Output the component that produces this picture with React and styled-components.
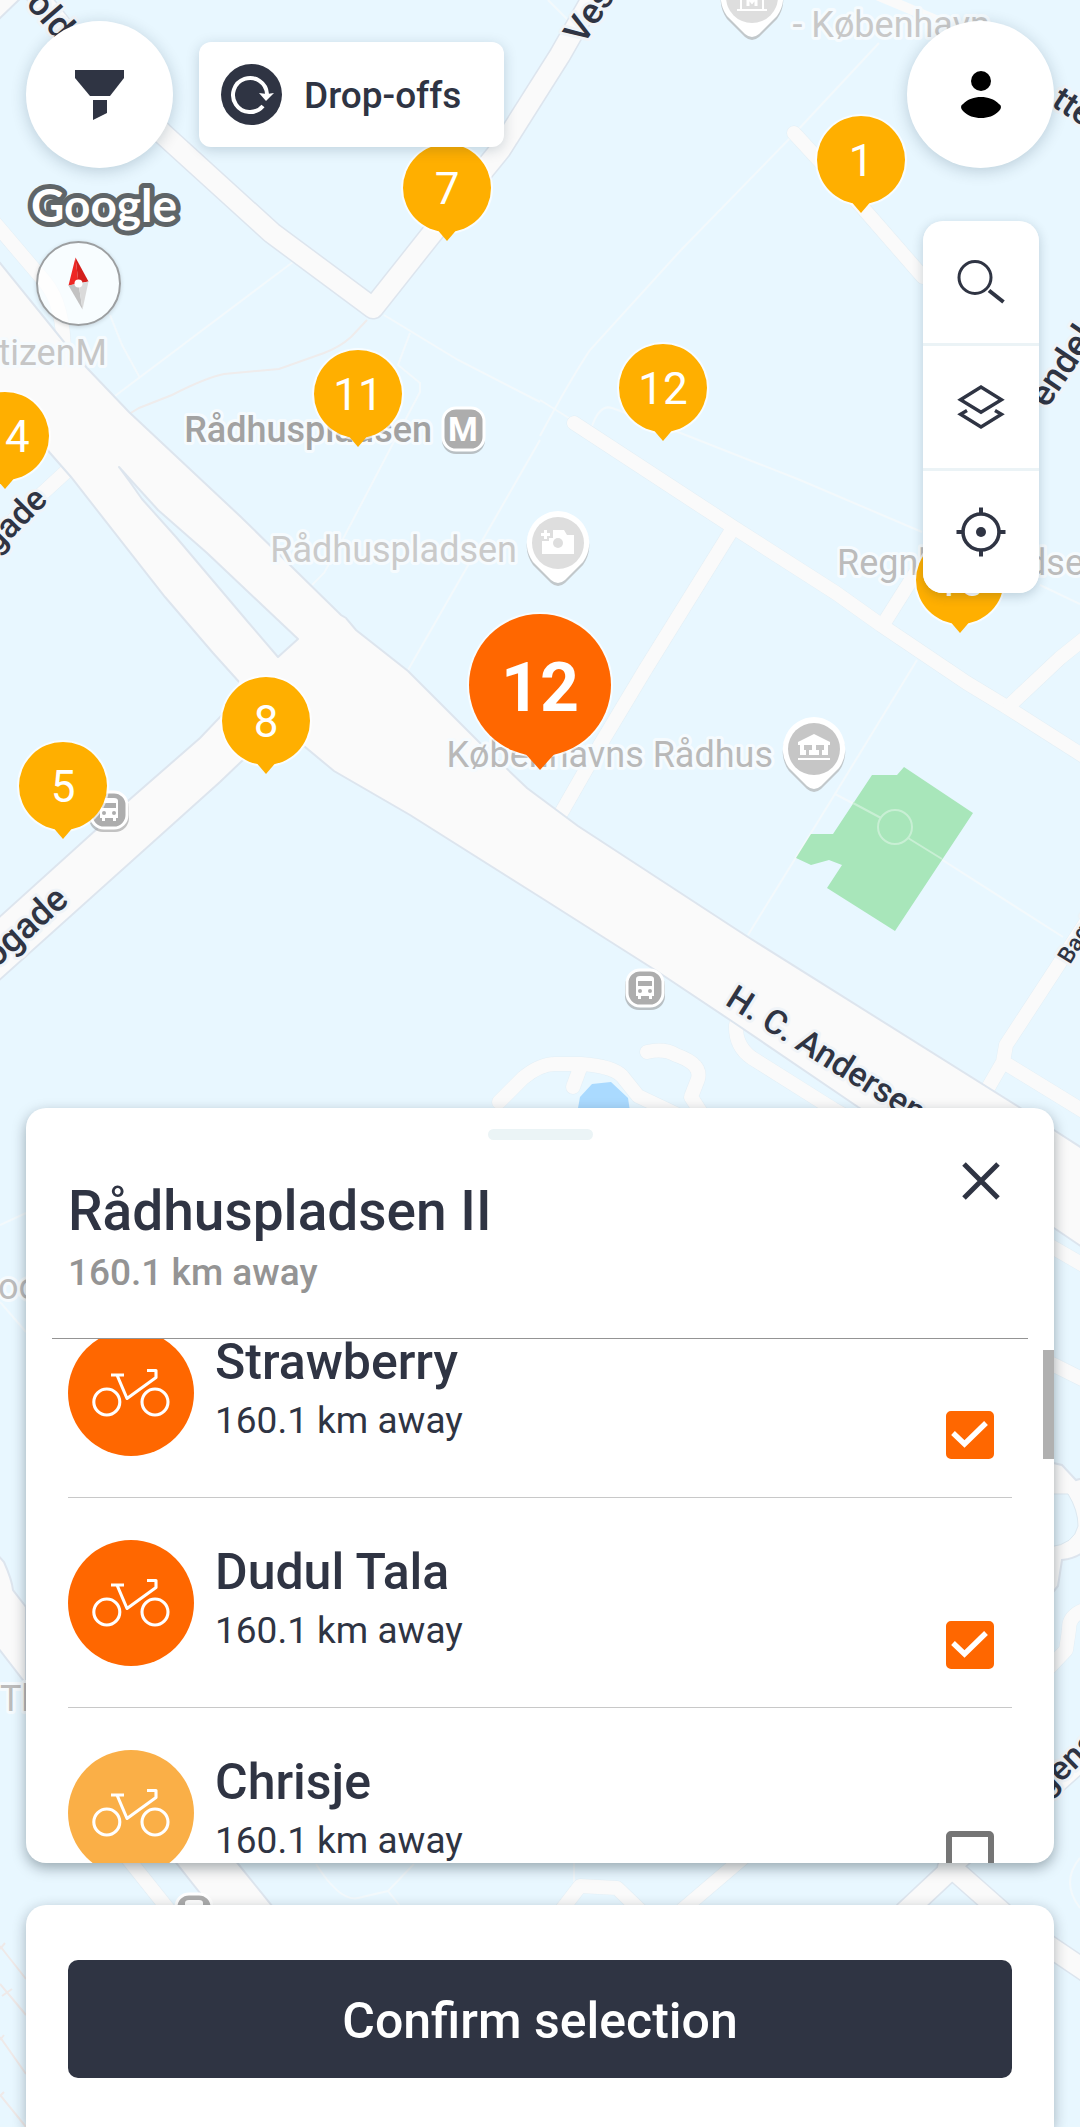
import { useLayoutEffect, useRef, useState } from "react";
import styled, { createGlobalStyle } from "styled-components";

const GlobalStyle = createGlobalStyle`
    * {
        box-sizing: border-box;
    }

    body {
        margin: 0;
        font-family: Roboto, "Liberation Sans", sans-serif;
        color: #2f3443;
        background-color: #e8f7ff;
    }

    button {
        border: none;
        padding: 0;
        font-family: inherit;
        color: inherit;
        cursor: pointer;
    }
`;

const Screen = styled.div`
    position: relative;
    min-height: 100vh;
    display: flex;
    flex-direction: column;
`;

/* ---------- map ---------- */

const MapLayer = styled.div`
    position: absolute;
    inset: 0;
    overflow: hidden;
`;

const MapCanvas = styled.div`
    position: relative;
    width: 100%;
    min-height: 100%;
    aspect-ratio: 1080 / 2127;
`;

const MapDrawing = styled.svg`
    position: absolute;
    width: 100%;
    height: 100%;
    font-family: Roboto, "Liberation Sans", sans-serif;
`;

const Pin = styled.button`
    position: absolute;
    left: ${props => (props.$x / 1080) * 100}%;
    top: ${props => (props.$y / 2127) * 100}%;
    transform: translate(-50%, -50%);
    width: ${props => (props.$active ? 142 : 88)}px;
    height: ${props => (props.$active ? 142 : 88)}px;
    padding-top: ${props => (props.$active ? 5 : 2)}px;
    border-radius: 50%;
    background-color: ${props => (props.$active ? "#ff6700" : "#ffaf00")};
    box-shadow: 0 0 0 2px rgba(255, 255, 255, 0.7);
    color: white;
    font-size: ${props => (props.$active ? 68 : 44)}px;
    font-weight: ${props => (props.$active ? 700 : 400)};

    &::after {
        content: "";
        position: absolute;
        left: 50%;
        bottom: ${props => (props.$active ? -14 : -9)}px;
        width: ${props => (props.$active ? 36 : 24)}px;
        height: ${props => (props.$active ? 20 : 14)}px;
        transform: translateX(-50%);
        background-color: inherit;
        clip-path: polygon(0 0, 100% 0, 50% 100%);
    }
`;

/* ---------- controls over the map ---------- */

const TopBar = styled.header`
    position: relative;
    display: flex;
    align-items: center;
    padding: 21px 26px 0;
`;

const RoundButton = styled.button`
    display: grid;
    place-items: center;
    width: 147px;
    height: 147px;
    border-radius: 50%;
    background-color: white;
    box-shadow: 0 3px 16px rgba(0, 40, 60, 0.2);
    margin-left: ${props => (props.$right ? "auto" : "0")};
`;

const FilterChip = styled.button`
    display: flex;
    align-items: center;
    gap: 22px;
    height: 105px;
    margin-left: 26px;
    padding: 0 43px 0 22px;
    border-radius: 12px;
    background-color: white;
    box-shadow: 0 3px 14px rgba(0, 40, 60, 0.18);
    font-size: 37px;
    line-height: 44px;
    font-weight: 500;

    span {
        padding-top: 3px;
    }
`;

const MapControls = styled.div`
    position: relative;
    display: flex;
    justify-content: space-between;
    align-items: flex-start;
    padding: 0 41px 0 26px;
`;

const Attribution = styled.div`
    display: flex;
    flex-direction: column;
    padding-top: 12px;
`;

const Compass = styled.button`
    width: 85px;
    height: 85px;
    margin: 1px 0 0 10px;
    border-radius: 50%;
    border: 2px solid #9c9fa1;
    background-color: rgba(255, 255, 255, 0.7);
    box-shadow: 0 1px 4px rgba(0, 0, 0, 0.15);
`;

const ToolStack = styled.div`
    display: flex;
    flex-direction: column;
    gap: 3px;
    width: 116px;
    margin-top: 53px;
    border-radius: 20px;
    overflow: hidden;
    background-color: #ebf3f6;
    box-shadow: 0 3px 12px rgba(0, 40, 60, 0.2);
`;

const ToolButton = styled.button`
    display: grid;
    place-items: center;
    height: 122px;
    background-color: white;
`;

/* ---------- bottom sheet ---------- */

const Sheet = styled.section`
    position: relative;
    margin: auto 26px 42px;
    border-radius: 20px;
    overflow: hidden;
    background-color: white;
    box-shadow: 0 5px 14px rgba(0, 20, 30, 0.35);
`;

const Handle = styled.div`
    width: 105px;
    height: 11px;
    margin: 21px auto 11px;
    border-radius: 6px;
    background-color: #ebf4f6;
`;

const SheetHeader = styled.div`
    display: flex;
    justify-content: space-between;
    align-items: flex-start;
    padding: 0 43px 43px 42px;
`;

const Title = styled.h1`
    margin: 28px 0 8px;
    font-size: 55px;
    line-height: 64px;
    font-weight: 500;
`;

const Distance = styled.p`
    margin: 0;
    font-size: 37px;
    line-height: 44px;
    font-weight: ${props => (props.$muted ? 500 : 400)};
    color: ${props => (props.$muted ? "#949494" : "inherit")};
`;

const CloseButton = styled.button`
    display: grid;
    place-items: center;
    width: 60px;
    height: 60px;
    background: none;
`;

const Divider = styled.hr`
    height: 1px;
    margin: 0 26px;
    border: none;
    background-color: #949494;
`;

const ListArea = styled.div`
    position: relative;
`;

const BikeList = styled.ul`
    max-height: 524px;
    margin: 0;
    padding: 0 42px;
    list-style-type: none;
    overflow-y: auto;
    scrollbar-width: none;
`;

const ScrollThumb = styled.div`
    position: absolute;
    top: 11px;
    right: 0;
    width: 11px;
    height: 109px;
    background-color: #b0b0b0;
`;

const BikeRow = styled.label`
    display: flex;
    gap: 21px;
    height: 209px;
    padding: 42px 18px 38px 0;
    cursor: pointer;
`;

const BikeItem = styled.li`
    height: 210px;
    border-bottom: 1px solid #c8c8c8;
`;

const BikeBadge = styled.span`
    flex: none;
    width: 126px;
    height: 126px;
    border-radius: 50%;
    background-color: ${props => (props.$selected ? "#ff6700" : "#faaf47")};
`;

const BikeText = styled.div`
    flex: 1;
    padding-top: 2px;
`;

const BikeName = styled.h2`
    margin: 0 0 7px;
    font-size: 50px;
    line-height: 60px;
    font-weight: 500;
`;

const CheckWrap = styled.span`
    display: grid;
    align-self: flex-end;

    > * {
        grid-area: 1 / 1;
    }

    svg {
        pointer-events: none;
    }
`;

const CheckInput = styled.input`
    appearance: none;
    width: 48px;
    height: 48px;
    margin: 0;
    border: 6px solid #757575;
    border-radius: 5px;
    background-color: white;

    &:checked {
        border-color: #ff6700;
        background-color: #ff6700;
    }
`;

const Footer = styled.footer`
    position: relative;
    margin: 0 26px;
    padding: 55px 42px 49px;
    border-radius: 20px 20px 0 0;
    background-color: white;
    box-shadow: 0 4px 14px rgba(0, 20, 30, 0.3);
`;

const ConfirmButton = styled.button`
    display: block;
    width: 100%;
    height: 118px;
    padding-top: 4px;
    border-radius: 10px;
    background-color: #2f3443;
    color: white;
    font-size: 50px;
    font-weight: 500;
`;

/* ---------- data ---------- */

const pins = [
  { label: "7", x: 447, y: 188 },
  { label: "1", x: 861, y: 160 },
  { label: "11", x: 358, y: 394 },
  { label: "12", x: 663, y: 388 },
  { label: "14", x: 5, y: 436 },
  { label: "10", x: 960, y: 580 },
  { label: "8", x: 266, y: 721 },
  { label: "5", x: 63, y: 786 },
  { label: "12", x: 540, y: 685, active: true },
];

const bikes = [
  { name: "Strawberry", distance: "160.1 km away", selected: true },
  { name: "Dudul Tala", distance: "160.1 km away", selected: true },
  { name: "Chrisje", distance: "160.1 km away", selected: false },
];

const mainRoads = [
  "M25 -20 L66 32 L162 133 L272 233 L373 308 L434 231 L500 150 L560 55 L597 -10",
  "M905 1912 L952 1868 L1004 1914",
  "M948 1868 L980 1840",
  "M1040 1940 L1090 1974",
  "M1030 1806 L1095 1748",
];

const streets = [
  "M794 133 L862 207 L923 277",
  "M574 423 L733 527 L836 593 L881 625 L967 683 L1005 706 L1085 757",
  "M730 533 L645 670 L600 745 L560 815",
  "M884 623 L930 550",
  "M1010 705 L1060 658 L1090 634",
  "M1090 916 L1057 967 L1006 1045 L1003 1062 L988 1088",
  "M1005 1063 L1085 1112",
  "M736 1025 Q735 1046 752 1058 L833 1109 L870 1130",
  "M499 1102 L523 1078 Q540 1064 555 1064 L581 1064 Q612 1066 622 1076 L638 1096 L678 1115",
  "M580 1068 L573 1087",
  "M647 1052 Q664 1048 676 1055 Q702 1064 698 1079 L691 1097 L702 1114",
  "M-5 537 L70 468",
  "M-6 222 L45 282 Q64 305 64 355",
  "M125 1855 L172 1914",
  "M560 1912 L580 1886 L617 1888 L644 1914",
  "M750 1852 L682 1910",
  "M1040 1240 L1085 1266",
  "M1040 1358 L1088 1382",
  "M1090 1608 Q1068 1614 1069 1630 L1066 1650 L1045 1672",
];

const footpaths = [
  "M293 262 L115 396",
  "M384 315 L458 360 L540 402",
  "M410 333 L398 365 L420 383 L420 392 L344 537 L324 573 L312 585",
  "M540 440 L408 670",
  "M110 315 L122 345 L140 378",
  "M879 43 L795 133 L681 250 L590 350 Q570 380 540 436",
  "M540 400 L572 420",
  "M592 426 Q600 404 612 408 L678 432 L800 480 L922 532",
  "M917 660 L835 794 L748 935",
  "M835 794 L881 818",
  "M908 838 L1063 937",
  "M548 0 L572 24",
  "M1040 585 L1080 604",
  "M0 1225 L26 1213",
  "M0 1302 L26 1332",
  "M316 1864 Q340 1902 358 1898 L388 1891 L414 1864",
  "M388 1891 L400 1906",
  "M574 1860 L574 1884",
  "M1080 1858 Q1060 1882 1080 1908",
];

const streetLabels = [
  { text: "oldgade", x: 25, y: 4, turn: 49, size: 36 },
  { text: "Vester", x: 583, y: 46, turn: -57, size: 36 },
  { text: "tte", x: 1050, y: 105, turn: 33 },
  { text: "endelst", x: 1047, y: 409, turn: -56, size: 36 },
  { text: "gade", x: 49, y: 501, turn: -45, anchor: "end" },
  { text: "brogade", x: 70, y: 902, turn: -42, anchor: "end", size: 36 },
  { text: "H. C. Andersens", x: 724, y: 1004, turn: 32 },
  { text: "Bag Rådhuset", x: 1070, y: 965, turn: -58, size: 23 },
  { text: "gens", x: 1047, y: 1797, turn: -44 },
];

const placeLabels = [
  { text: "citizenM", x: 107, y: 365, color: "#c6c6c6", anchor: "end" },
  { text: "- København", x: 990, y: 37, color: "#c8c8c8", anchor: "end" },
  { text: "Rådhuspladsen", x: 432, y: 442, color: "#a2a2a2", anchor: "end", weight: 500 },
  { text: "Rådhuspladsen", x: 517, y: 562, color: "#cacaca", anchor: "end" },
  { text: "Københavns Rådhus", x: 773, y: 767, color: "#b9b9b9", anchor: "end" },
  { text: "Regnbuepladsen", x: 837, y: 575, color: "#bcbcbc" },
  { text: "oo", x: -2, y: 1299, color: "#bcbcbc" },
  { text: "Th", x: 0, y: 1711, color: "#bcbcbc" },
];

/* ---------- map parts ---------- */

const PlacePin = ({ x, y, fill, children }) => (
  <g transform={`translate(${x} ${y})`}>
    <path
      d="M0 -32 A32 32 0 0 1 25 19 L7 37 Q0 43 -7 37 L-25 19 A32 32 0 0 1 0 -32 Z"
      fill="#a8a8a8" opacity="0.6" transform="translate(0 3)"
    />
    <path
      d="M0 -32 A32 32 0 0 1 25 19 L7 37 Q0 43 -7 37 L-25 19 A32 32 0 0 1 0 -32 Z"
      fill="white"
    />
    <circle r="26" fill={fill} />
    {children}
  </g>
);

const BusStop = ({ x, y }) => (
  <g transform={`translate(${x} ${y})`}>
    <rect x="-20" y="-16" width="40" height="38" rx="14" fill="#8a8a8a" opacity="0.5" />
    <rect x="-18" y="-18" width="36" height="36" rx="13" fill="#adadad" stroke="white" strokeWidth="3" />
    <path d="M-9 -9 Q-9 -12 -5 -12 H5 Q9 -12 9 -9 V8 H7 V11 H4 V8 H-4 V11 H-7 V8 H-9 Z" fill="white" />
    <rect x="-7" y="-7" width="14" height="5" fill="#adadad" />
    <circle cx="-5" cy="3" r="2" fill="#adadad" />
    <circle cx="5" cy="3" r="2" fill="#adadad" />
  </g>
);

const CityMap = () => (
  <MapDrawing viewBox="0 0 1080 2127" preserveAspectRatio="xMidYMin slice" aria-hidden="true">
    <rect width="1080" height="2127" fill="#e8f7ff" />

    <g fill="none" stroke="#f3f9fc" strokeWidth="2">
      {footpaths.map(d => <path key={d} d={d} />)}
    </g>
    <path
      d="M367 320 L351 337 Q340 347 324 353 L279 369 L224 374 Q205 378 172 395 L139 408 L129 414"
      fill="none" stroke="#efecec" strokeWidth="2"
    />
    <g fill="none" stroke="#efe9e8" strokeWidth="2">
      <path d="M0 1946 L26 1979 M0 1984 L26 2015 M0 2037 L26 2074 M0 2095 L26 2127" />
      <path d="M0 1949 L5 1943 M2 1996 L12 1989 M0 2040 L4 2035 M0 2096 L4 2092" />
    </g>

    {/* park and pond */}
    <path
      d="M904 767 L973 813 L895 931 L827 888 L842 865 L829 860 L811 865 L796 858 L811 834 H833 L872 775 H897 Z"
      fill="#a8e6ba"
    />
    <g fill="none" stroke="#c8efd4" strokeWidth="2">
      <circle cx="895" cy="827" r="17" />
      <path d="M853 803 L881 818 M908 838 L942 859" />
    </g>
    <path d="M575 1125 L580 1097 L592 1084 L611 1082 L628 1098 L632 1125 Z" fill="#aadaff" />

    <g fill="none" strokeLinecap="round" strokeLinejoin="round">
      {streets.map(d => <path key={d} d={d} stroke="#e3eff6" strokeWidth="15" />)}
      {streets.map(d => <path key={d} d={d} stroke="#fafafa" strokeWidth="14" />)}
      <path d="M860 -12 L936 20" stroke="#fafafa" strokeWidth="10" />
    </g>

    {/* boulevard with its side branch */}
    <g fill="#fafafa" stroke="#dde5ee" strokeWidth="2">
      <path d="M-5 23 L24 -5 H-5 Z" />
      <path d="M-5 257 L0 263 L64 342 L87 368 L129 412 L241 517 L341 615 L346 618 L356 630 L408 671 L434 697 L480 743 L527 788 L578 826 L748 937 L1019 1107 L1054 1130 L1085 1150 V1249 L1054 1228 L858 1107 L733 1022 L655 970 L540 897 L410 815 L334 771 L305 747 L266 735 L243 760 L220 782 L-5 984 V921 L129 800 L200 738 L222 715 L240 683 L213 653 L165 597 L71 477 L50 453 L-5 387 Z" />
      <path d="M170 1855 H231 L277 1912 H215 Z" />
      <path d="M-5 1552 L4 1562 Q12 1580 13 1590 L26 1607 V1684 L-5 1644 Z" />
      <path d="M1040 1460 L1062 1465 L1076 1480 L1090 1476 V1544 Q1082 1558 1062 1560 L1058 1586 L1045 1602 Z" />
    </g>
    <path d="M240 680 L305 747 L266 760 L243 760 L222 715 Z" fill="#fafafa" />
    <path
      d="M119 467 L130 482 L142 499 L176 537 L248 622 L278 657 L298 639 L262 605 L207 553 L158 510 L138 488 Z"
      fill="#e8f7ff" stroke="#dde5ee" strokeWidth="2" strokeLinejoin="round"
    />
    <path d="M1048 1494 H1068 Q1078 1510 1078 1526 Q1074 1544 1050 1547 Z" fill="#e8f7ff" stroke="#dde9f1" />

    <g fill="none" strokeLinecap="round" strokeLinejoin="round">
      {mainRoads.map(d => <path key={d} d={d} stroke="#dde5ee" strokeWidth="23" />)}
      {mainRoads.map(d => <path key={d} d={d} stroke="#fafafa" strokeWidth="20" />)}
    </g>

    <g fill="#2f3443" stroke="#f0f4f8" strokeWidth="6" strokeLinejoin="round" paintOrder="stroke" fontWeight="500">
      {streetLabels.map(l => (
        <text
          key={l.text}
          transform={`translate(${l.x} ${l.y}) rotate(${l.turn})`}
          fontSize={l.size || 34}
          textAnchor={l.anchor}
        >
          {l.text}
        </text>
      ))}
    </g>

    <g stroke="#f6fbfe" strokeWidth="6" strokeLinejoin="round" paintOrder="stroke" fontSize="36">
      {placeLabels.map(l => (
        <text
          key={l.text + l.y}
          x={l.x}
          y={l.y}
          fill={l.color}
          fontWeight={l.weight || 400}
          textAnchor={l.anchor}
        >
          {l.text}
        </text>
      ))}
    </g>

    {/* metro */}
    <rect x="442" y="409" width="43" height="45" rx="14" fill="#8a8a8a" opacity="0.5" />
    <rect x="443" y="408" width="41" height="42" rx="13" fill="#adadad" stroke="white" strokeWidth="3" />
    <text x="463" y="441" fontSize="34" fontWeight="700" fill="white" textAnchor="middle">M</text>

    <BusStop x={645} y={988} />
    <BusStop x={109} y={810} />
    <BusStop x={194} y={1912} />

    <PlacePin x={558} y={543} fill="#dedede">
      <path
        d="M-5 -13 H6 L9 -8 H16 V11 H-16 V-2 H-9 V-5 H-5 Z M-14 -13 H-11 V-10 H-8 V-7 H-11 V-4 H-14 V-7 H-17 V-10 H-14 Z"
        fill="white"
      />
      <circle r="5" fill="#dedede" />
    </PlacePin>
    <PlacePin x={814} y={749} fill="#c6c6c6">
      <path d="M0 -15 L16 -7 V-4 H14 V6 H-14 V-4 H-16 V-7 Z M-16 9 H16 V11 H-16 Z" fill="white" />
      <path d="M-10 -4 H-2 V1 H-5 V6 H-8 V1 H-10 Z M2 -4 H10 V1 H8 V6 H5 V1 H2 Z" fill="#c6c6c6" />
    </PlacePin>
    <PlacePin x={752} y={-3} fill="#dedede">
      <path d="M-11 -4 V12 M11 -4 V12 M-15 13 H15" fill="none" stroke="white" strokeWidth="2" />
      <path d="M-4 9 V0 L0 5 L4 0 V9" fill="none" stroke="white" strokeWidth="3" />
    </PlacePin>
  </MapDrawing>
);

/* ---------- icons ---------- */

const FunnelIcon = () => (
  <svg width="49" height="50" viewBox="0 0 49 50" fill="#2f3443">
    <path d="M0 0 H49 V8 L35 26 H15 L0 8 Z" />
    <path d="M18 30 H32 V43 L18 50 Z" />
  </svg>
);

const PersonIcon = () => (
  <svg width="40" height="48" viewBox="0 0 40 48" fill="black">
    <circle cx="20" cy="10" r="10" />
    <path d="M0 36 Q0 34 2 33 C7 28 13 26 20 26 S33 28 38 33 Q40 34 40 36 Q40 38 38 40 C33 45 27 47 20 47 S7 45 2 40 Q0 38 0 36 Z" />
  </svg>
);

const ReturnIcon = () => (
  <svg width="61" height="61" viewBox="0 0 61 61">
    <circle cx="30.5" cy="30.5" r="30.5" fill="#2f3443" />
    <path d="M42 42 A17 17 0 1 1 46 30" fill="none" stroke="white" strokeWidth="4" />
    <path d="M38 29 L46 30 L53 29 L45 37 Z" fill="white" />
  </svg>
);

const SearchIcon = () => (
  <svg width="48" height="48" viewBox="0 0 48 48" fill="none" stroke="#2f3443">
    <circle cx="18" cy="19.5" r="16" strokeWidth="3" />
    <path d="M32 32.5 L46.5 44" strokeWidth="4" />
  </svg>
);

const LayersIcon = () => (
  <svg width="48" height="48" viewBox="0 0 48 48" fill="none" stroke="#2f3443" strokeWidth="3.4">
    <path d="M3.5 16.7 L24 4 L44.5 16.7 L24 29.3 Z" />
    <path d="M10 27.5 L3.5 31.3 L24 44 L44.5 31.3 L38 27.5" />
  </svg>
);

const TargetIcon = () => (
  <svg width="50" height="50" viewBox="0 0 50 50" fill="none" stroke="#2f3443" strokeWidth="4">
    <circle cx="25" cy="25" r="18" strokeWidth="3.6" />
    <circle cx="25" cy="25" r="5" fill="#2f3443" stroke="none" />
    <path d="M25 0.5 V8 M25 42 V49.5 M0.5 25 H8 M42 25 H49.5" />
  </svg>
);

const CloseIcon = () => (
  <svg width="38" height="38" viewBox="0 0 38 38" stroke="#2f3443" strokeWidth="5">
    <path d="M2 2 L36 36 M36 2 L2 36" />
  </svg>
);

const BikeIcon = () => (
  <svg width="126" height="126" viewBox="0 0 126 126" fill="none" stroke="white" strokeWidth="3.1">
    <circle cx="38.8" cy="72" r="13" />
    <circle cx="87" cy="72" r="13" />
    <path d="M43 45 H56 M49 45 L59 68.5 L88 47.5 V40.5 H79" strokeLinejoin="round" />
  </svg>
);

const GoogleLogo = () => (
  <svg width="156" height="60" viewBox="0 0 156 60" role="img" aria-label="Google">
    <text
      x="5" y="42" fontFamily="Lato, sans-serif" fontSize="46" fontWeight="700"
      fill="white" stroke="#5f6568" strokeWidth="10" strokeLinejoin="round" paintOrder="stroke"
    >
      Google
    </text>
  </svg>
);

const Needle = () => (
  <svg width="81" height="81" viewBox="-40.5 -40.5 81 81">
    <path d="M-3 -26 L-10 2 L0 0 Z" fill="#ee2724" />
    <path d="M-3 -26 L10 -2 L0 0 Z" fill="#d31f1c" />
    <path d="M4 26 L-10 2 L0 0 Z" fill="#c2c2c2" />
    <path d="M4 26 L10 -2 L0 0 Z" fill="#dadada" />
    <circle r="4" fill="white" />
  </svg>
);

/* ---------- page ---------- */

const Bike = ({ bike, onToggle }) => (
  <BikeItem>
    <BikeRow>
      <BikeBadge $selected={bike.selected}>
        <BikeIcon />
      </BikeBadge>
      <BikeText>
        <BikeName>{bike.name}</BikeName>
        <Distance>{bike.distance}</Distance>
      </BikeText>
      <CheckWrap>
        <CheckInput type="checkbox" checked={bike.selected} onChange={onToggle} />
        {bike.selected && (
          <svg width="48" height="48" viewBox="0 0 48 48" fill="none" stroke="white" strokeWidth="5.4">
            <path d="M7 22 L18.5 33 L40 12" />
          </svg>
        )}
      </CheckWrap>
    </BikeRow>
  </BikeItem>
);

const App = () => {
  const listRef = useRef(null);
  const [items, setItems] = useState(bikes);

  useLayoutEffect(() => {
    listRef.current.scrollTop = 51;
  }, []);

  const toggle = name => {
    setItems(items.map(b => (b.name === name ? { ...b, selected: !b.selected } : b)));
  };

  return (
    <>
      <GlobalStyle />
      <Screen>
        <MapLayer>
          <MapCanvas>
            <CityMap />
            {pins.map(pin => (
              <Pin key={`${pin.x}-${pin.y}`} $x={pin.x} $y={pin.y} $active={pin.active}>
                {pin.label}
              </Pin>
            ))}
          </MapCanvas>
        </MapLayer>

        <TopBar>
          <RoundButton aria-label="Filter"><FunnelIcon /></RoundButton>
          <FilterChip>
            <ReturnIcon />
            <span>Drop-offs</span>
          </FilterChip>
          <RoundButton $right aria-label="Profile"><PersonIcon /></RoundButton>
        </TopBar>

        <MapControls>
          <Attribution>
            <GoogleLogo />
            <Compass aria-label="Compass"><Needle /></Compass>
          </Attribution>
          <ToolStack>
            <ToolButton aria-label="Search"><SearchIcon /></ToolButton>
            <ToolButton aria-label="Layers"><LayersIcon /></ToolButton>
            <ToolButton aria-label="My location"><TargetIcon /></ToolButton>
          </ToolStack>
        </MapControls>

        <Sheet>
          <Handle />
          <SheetHeader>
            <div>
              <Title>Rådhuspladsen II</Title>
              <Distance $muted>160.1 km away</Distance>
            </div>
            <CloseButton aria-label="Close"><CloseIcon /></CloseButton>
          </SheetHeader>
          <Divider />
          <ListArea>
            <BikeList ref={listRef}>
              {items.map(bike => (
                <Bike key={bike.name} bike={bike} onToggle={() => toggle(bike.name)} />
              ))}
            </BikeList>
            <ScrollThumb />
          </ListArea>
        </Sheet>

        <Footer>
          <ConfirmButton>Confirm selection</ConfirmButton>
        </Footer>
      </Screen>
    </>
  );
};

export default App;
